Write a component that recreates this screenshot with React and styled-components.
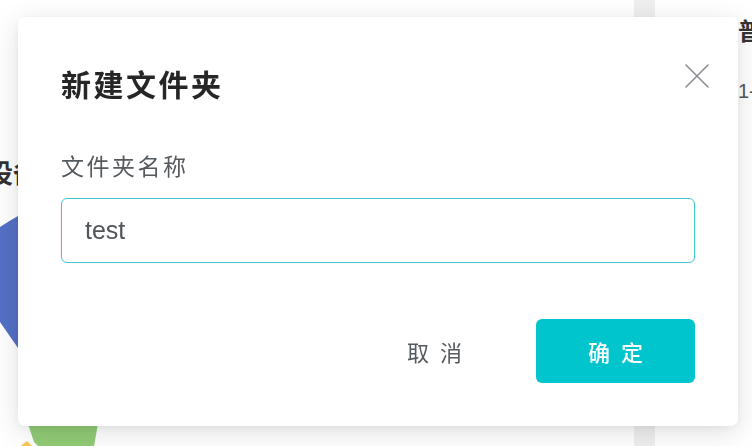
import React, { useState } from "react";
import styled, { createGlobalStyle } from "styled-components";

const GlobalStyle = createGlobalStyle`
  html, body {
    margin: 0;
    padding: 0;
    background: #ffffff;
    font-family: "Helvetica Neue", "Liberation Sans", "Noto Sans CJK SC", sans-serif;
    overflow: hidden;
  }
`;

const Page = styled.div`
  display: flex;
  width: 752px;
  height: 446px;
  overflow: hidden;
`;

const MainPanel = styled.div`
  width: 634px;
  flex-shrink: 0;
  display: flex;
  flex-direction: column;
  padding-top: 156px;
  box-sizing: border-box;
`;

const SectionTitle = styled.h2`
  margin: 0 0 0 -13px;
  font-size: 26px;
  line-height: 36px;
  font-weight: 700;
  color: #333;
  white-space: nowrap;
`;

const ChartBox = styled.div`
  margin-top: 20px;
  height: 240px;
`;

const Gutter = styled.div`
  width: 21px;
  flex-shrink: 0;
  background: #efefef;
`;

const SidePanel = styled.div`
  flex: 1;
  padding: 16px 0 0 83px;
  white-space: nowrap;
`;

const SideTitle = styled.div`
  font-size: 24px;
  line-height: 32px;
  font-weight: 700;
  color: #333;
`;

const SideText = styled.div`
  margin-top: 30px;
  font-size: 20px;
  line-height: 26px;
  color: #555;
`;

const Overlay = styled.div`
  position: fixed;
  inset: 0;
  padding: 17px 14px 20px 18px;
  display: flex;
  align-items: flex-start;
`;

const Dialog = styled.div`
  position: relative;
  width: 720px;
  height: 409px;
  box-sizing: border-box;
  background: #fff;
  border-radius: 7px;
  box-shadow: 0 6px 28px rgba(0, 0, 0, 0.13), 0 2px 8px rgba(0, 0, 0, 0.05);
  padding: 49px 43px 0 43px;
  display: flex;
  flex-direction: column;
`;

const CloseButton = styled.button`
  position: absolute;
  top: 46px;
  right: 28px;
  width: 26px;
  height: 26px;
  padding: 0;
  border: 0;
  background: transparent;
  cursor: pointer;
  display: flex;
  align-items: center;
  justify-content: center;
`;

const Title = styled.h3`
  margin: 0;
  font-size: 30px;
  line-height: 40px;
  font-weight: 700;
  letter-spacing: 2.5px;
  color: #262626;
`;

const Label = styled.label`
  margin-top: 45px;
  font-size: 23px;
  line-height: 32px;
  letter-spacing: 2.5px;
  color: #555a5f;
`;

const Input = styled.input`
  margin-top: 15px;
  width: 634px;
  height: 65px;
  box-sizing: border-box;
  border: 1px solid #3fcad2;
  border-radius: 6px;
  box-shadow: 0 0 0 1px rgba(255, 220, 232, 0.25);
  padding: 0 23px;
  font-family: "Helvetica Neue", "Liberation Sans", sans-serif;
  font-size: 25px;
  color: #50555a;
  outline: none;
  background: #fff;
`;

const Footer = styled.div`
  margin-top: 56px;
  display: flex;
  justify-content: flex-end;
  align-items: center;
  gap: 63px;
`;

const Button = styled.button`
  height: 64px;
  min-width: ${(p) => (p.$primary ? "159px" : "auto")};
  padding: 0;
  border: 0;
  border-radius: 6px;
  background: ${(p) => (p.$primary ? "#00c5cd" : "transparent")};
  color: ${(p) => (p.$primary ? "#ffffff" : "#555a5f")};
  font-family: "Noto Sans CJK SC", sans-serif;
  font-size: 22px;
  font-weight: ${(p) => (p.$primary ? 500 : 400)};
  letter-spacing: 11px;
  text-indent: 11px;
  cursor: pointer;
`;

function PieChart() {
  return (
    <svg width="180" height="240" viewBox="0 0 180 240">
      <path d="M0 15 Q9 9 18 4 L30 0 L30 150 L18 136 L0 110 Z" fill="#5470c6" />
      <path d="M24 200 L100 200 L93 240 L44 240 L34 230 Z" fill="#91cc75" />
      <path d="M18 236 L27 229 L38 240 L16 240 Z" fill="#fac858" />
    </svg>
  );
}

export default function App() {
  const [name, setName] = useState("test");

  return (
    <>
      <GlobalStyle />
      <Page>
        <MainPanel>
          <SectionTitle>设备分布</SectionTitle>
          <ChartBox>
            <PieChart />
          </ChartBox>
        </MainPanel>
        <Gutter />
        <SidePanel>
          <SideTitle>普通</SideTitle>
          <SideText>1-2</SideText>
        </SidePanel>
      </Page>
      <Overlay>
        <Dialog>
          <CloseButton aria-label="close">
            <svg width="24" height="24" viewBox="0 0 24 24">
              <path
                d="M1 1 L23 23 M23 1 L1 23"
                stroke="#8a8d91"
                strokeWidth="1.6"
                strokeLinecap="round"
              />
            </svg>
          </CloseButton>
          <Title>新建文件夹</Title>
          <Label>文件夹名称</Label>
          <Input value={name} onChange={(e) => setName(e.target.value)} />
          <Footer>
            <Button>取消</Button>
            <Button $primary>确定</Button>
          </Footer>
        </Dialog>
      </Overlay>
    </>
  );
}
